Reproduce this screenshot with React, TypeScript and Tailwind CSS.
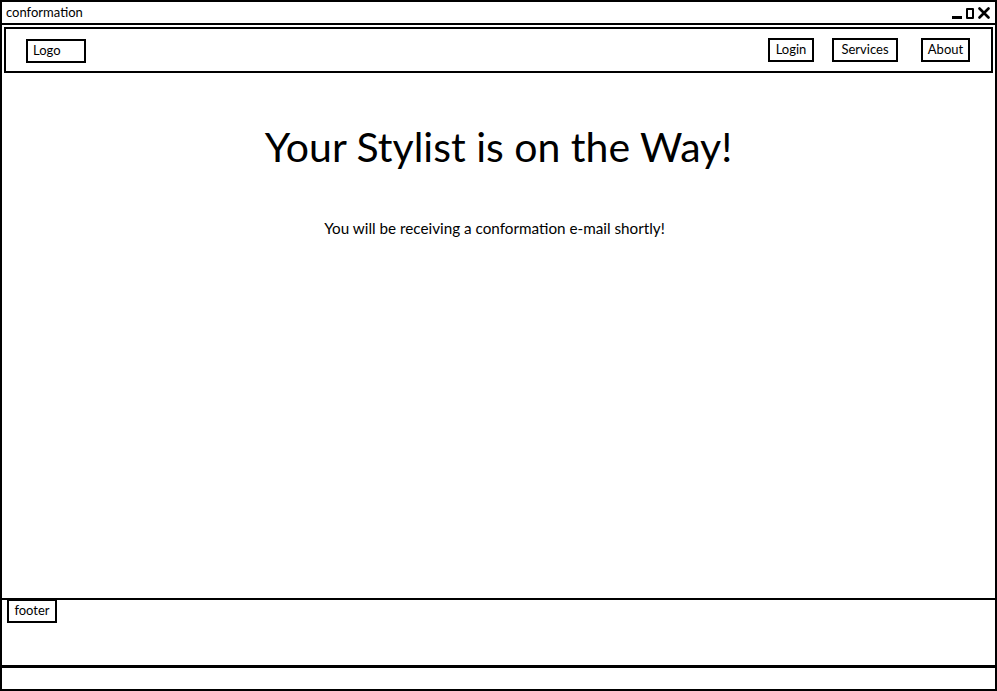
import React from "react";

const font = { fontFamily: '"Lato", "Open Sans", sans-serif' };

function Btn({ children, className = "" }: { children: React.ReactNode; className?: string }) {
  return (
    <div
      className={`border-2 border-black bg-white h-[24px] flex items-center justify-center text-[13px] text-black ${className}`}
    >
      {children}
    </div>
  );
}

export default function App() {
  return (
    <div
      className="w-[997px] h-[691px] bg-white border-2 border-black flex flex-col overflow-hidden text-black"
      style={font}
    >
      <div className="h-[23px] border-b-2 border-black flex items-center justify-between pl-[4px] pr-[5px] shrink-0">
        <span className="text-[13px] leading-none">conformation</span>
        <div className="flex items-end gap-[4px] h-[12px]">
          <div className="w-[10px] h-[3px] bg-black" />
          <div className="w-[8px] h-[11px] border-2 border-black rounded-[1px]" />
          <svg width="12" height="12" viewBox="0 0 12 12">
            <path d="M1.5 1.5 L10.5 10.5 M10.5 1.5 L1.5 10.5" stroke="black" strokeWidth="2.6" strokeLinecap="round" />
          </svg>
        </div>
      </div>
      <div className="mt-[2px] mx-[2px] h-[46px] border-2 border-black flex items-center justify-between pl-[20px] pr-[21px] shrink-0">
        <Btn className="w-[60px] justify-start pl-[5px] mt-[2px]">Logo</Btn>
        <div className="flex items-center">
          <Btn className="w-[46px]">Login</Btn>
          <Btn className="w-[66px] ml-[18px]">Services</Btn>
          <Btn className="w-[49px] ml-[23px]">About</Btn>
        </div>
      </div>
      <div className="flex-1 flex flex-col items-center">
        <h1 className="mt-[53px] text-[41px] leading-[42px] font-normal">Your Stylist is on the Way!</h1>
        <p className="mt-[50px] pr-[8px] text-[15.25px] leading-[20px]">You will be receiving a conformation e-mail shortly!</p>
      </div>
      <div className="h-[70px] border-t-2 border-b-[3px] border-black px-[5px] shrink-0">
        <Btn className="w-[50px] h-[23px] -mt-[1px]">footer</Btn>
      </div>
      <div className="h-[21px] shrink-0" />
    </div>
  );
}
